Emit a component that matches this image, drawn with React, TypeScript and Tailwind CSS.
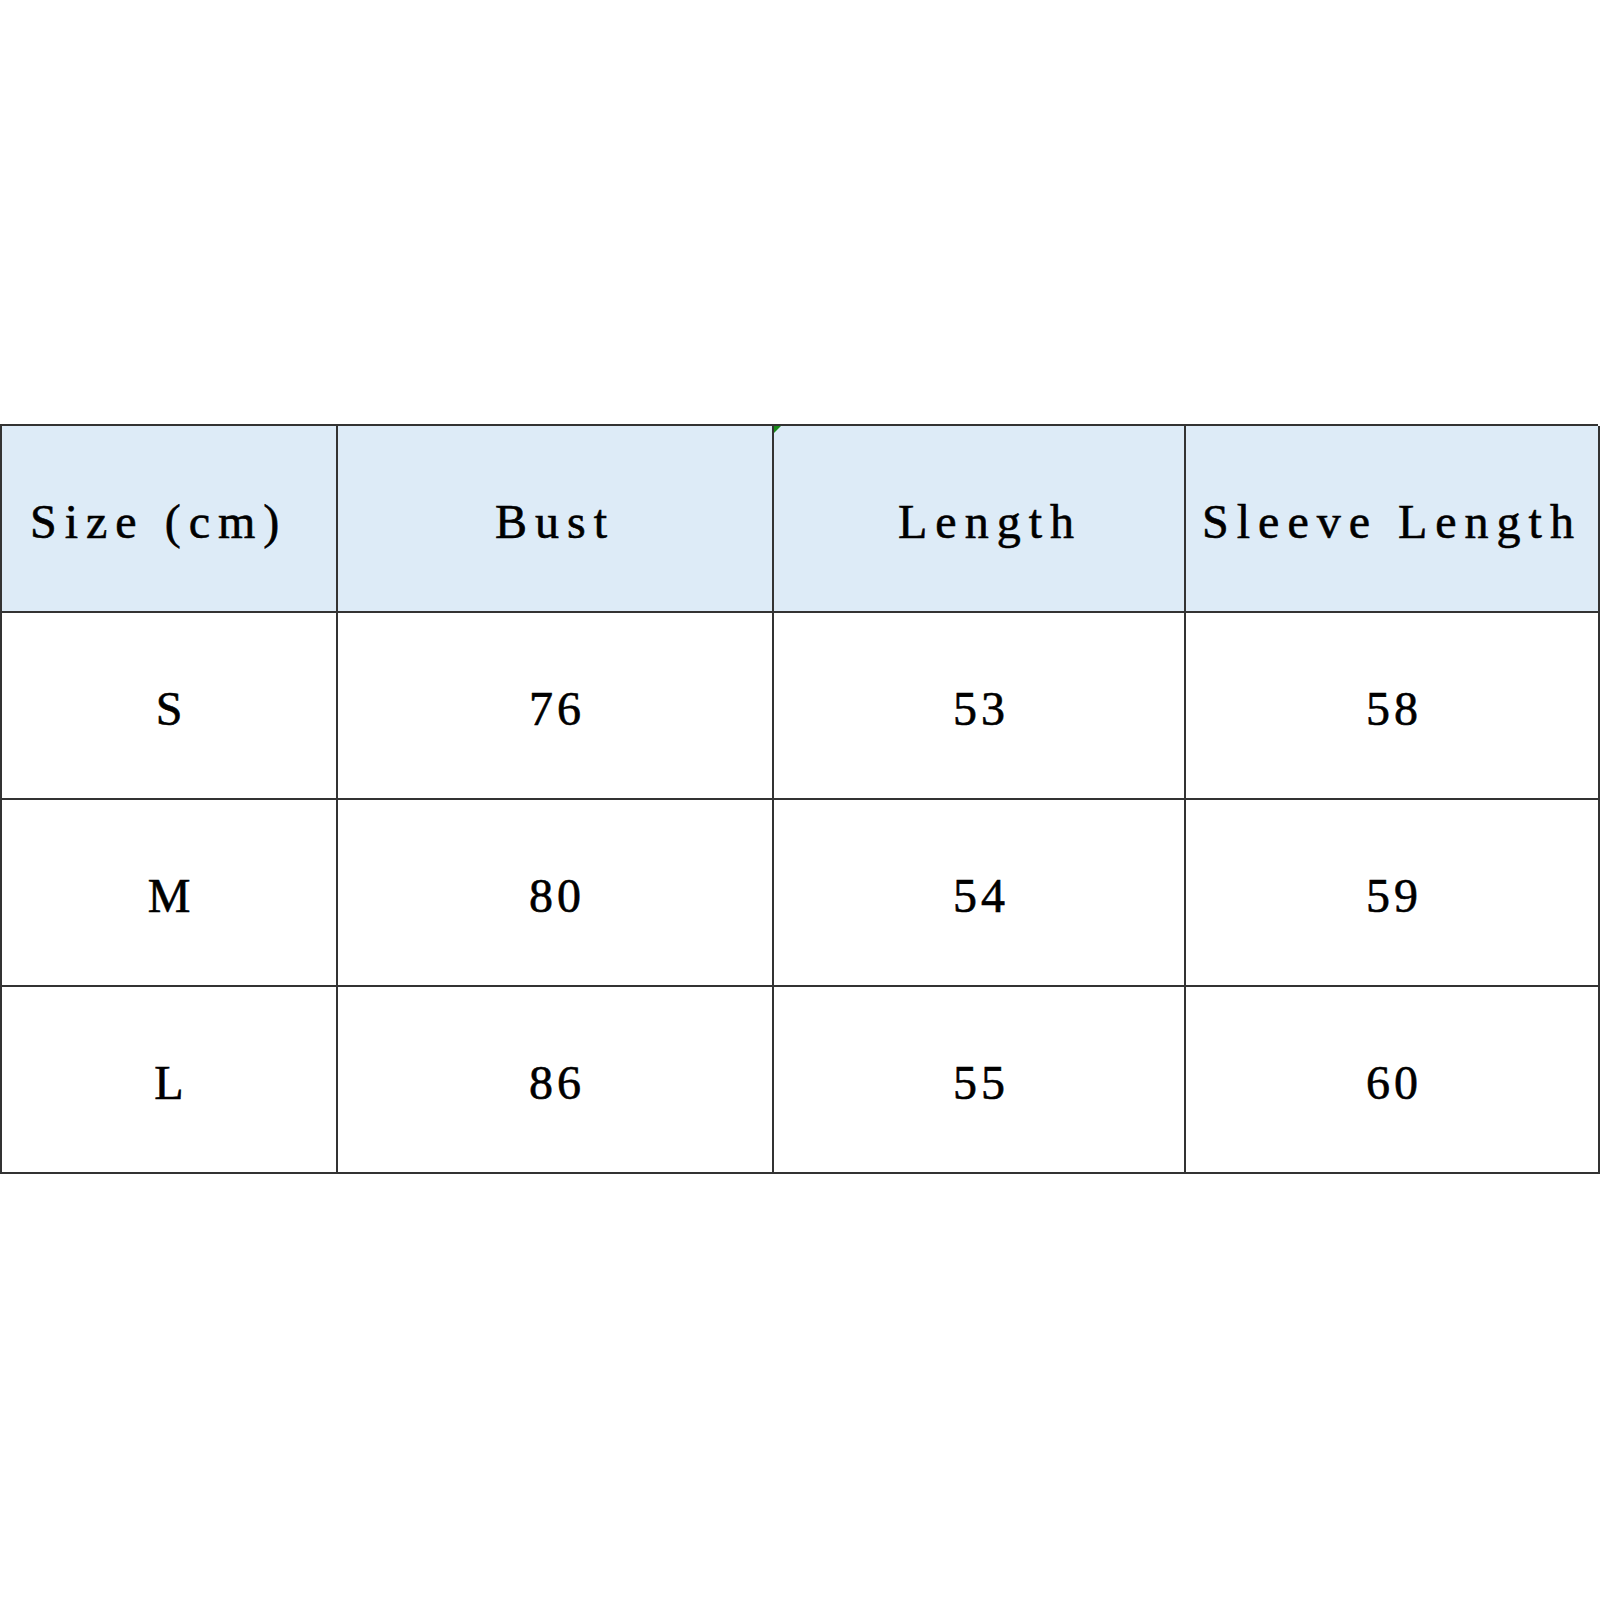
import React from "react";

const header = ["Size (cm)", "Bust", "Length", "Sleeve Length"];
const rows = [
  ["S", "76", "53", "58"],
  ["M", "80", "54", "59"],
  ["L", "86", "55", "60"],
];

export default function App() {
  return (
    <div
      className="w-[1600px] h-[1600px] bg-white pt-[424px]"
      style={{ fontFamily: '"Liberation Serif", "Noto Sans CJK SC", serif' }}
    >
      <div className="relative grid grid-cols-[336px_436px_412px_414px] w-[1598px] border-t-2 border-l-2 border-[#333333] text-[48px] text-black [-webkit-text-stroke:0.6px_black]">
        {header.map((h, i) => (
          <div
            key={h}
            className={`h-[187px] flex items-center pt-[7px] bg-[#ddebf7] border-r-2 border-b-2 border-[#333333] tracking-[8px] whitespace-pre ${
              i === 0 ? "justify-start pl-[28px]" : "justify-center"
            } ${i === 2 ? "pl-[22px]" : ""}`}
          >
            {h}
          </div>
        ))}
        {rows.map((r) =>
          r.map((c, j) => (
            <div
              key={r[0] + j}
              className="h-[187px] flex items-center justify-center pt-[6px] bg-white border-r-2 border-b-2 border-[#333333] tracking-[4px] pl-[4px]"
            >
              {c}
            </div>
          ))
        )}
        <div className="absolute left-[772px] top-0 w-0 h-0 border-t-[7px] border-r-[7px] border-t-[#1a8a1a] border-r-transparent" />
      </div>
    </div>
  );
}
